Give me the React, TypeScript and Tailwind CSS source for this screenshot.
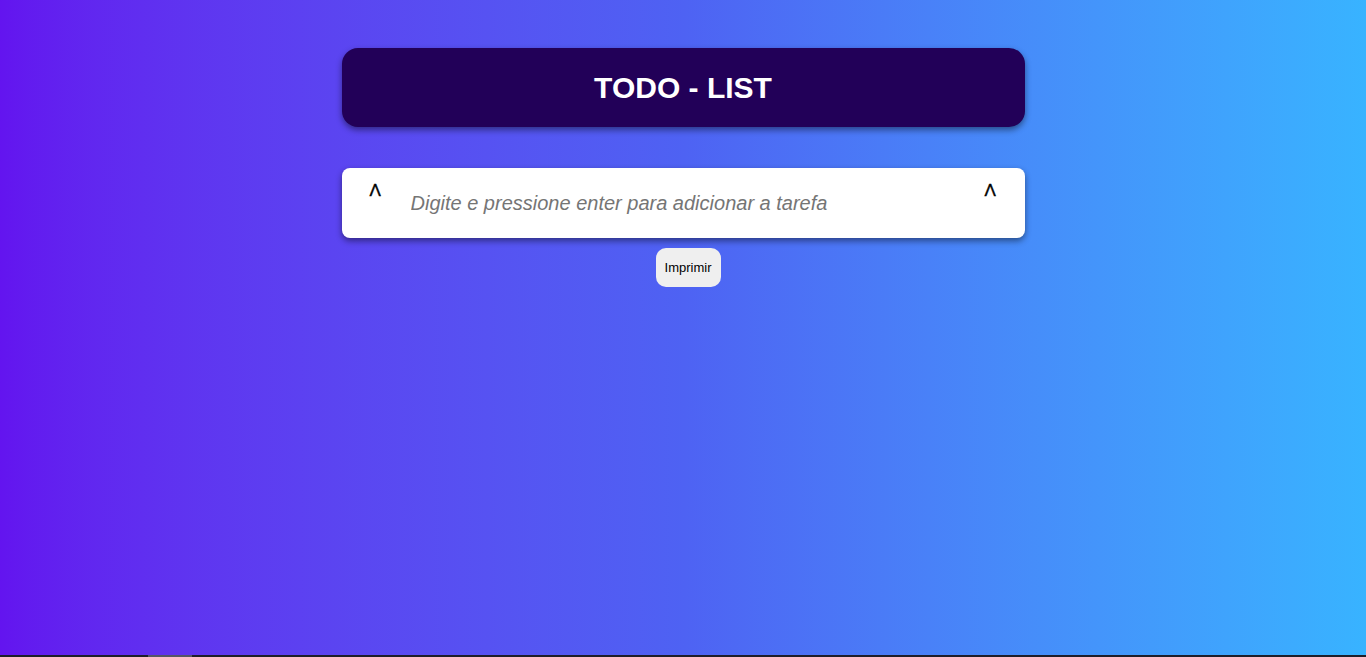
export default function App() {
  return (
    <div className="h-[657px] w-full flex flex-col overflow-hidden" style={{ fontFamily: '"Liberation Sans", Arial, sans-serif' }}>
      <div className="h-[655px] w-full bg-gradient-to-r from-[#6314ef] via-[#4e62f3] to-[#38b3ff] flex flex-col items-center pt-[48px]">
        <div className="w-[683px] h-[79px] rounded-[16px] bg-[#220058] shadow-[0_3px_6px_rgba(0,0,0,0.45)] flex items-center justify-center">
          <h1 className="text-white font-bold text-[30px] leading-none">TODO - LIST</h1>
        </div>
        <div className="mt-[41px] w-[683px] h-[70px] rounded-[8px] bg-white shadow-[0_3px_6px_rgba(0,0,0,0.45)] flex items-start pl-[28px] pr-[28px] pt-[14px]">
          <span className="text-black text-[17px] w-[12px] leading-[17px]" style={{ WebkitTextStroke: '0.4px black' }}>Λ</span>
          <input
            className="flex-1 ml-[29px] mt-[6px] outline-none text-[20px] italic placeholder:text-[#757575] bg-transparent"
            placeholder="Digite e pressione enter para adicionar a tarefa"
          />
          <span className="text-black text-[17px] w-[12px] leading-[17px]" style={{ WebkitTextStroke: '0.4px black' }}>Λ</span>
        </div>
        <button className="mt-[10px] ml-[10px] w-[65px] h-[39px] rounded-[10px] bg-[#efefef] text-black text-[13px]">Imprimir</button>
      </div>
      <div className="h-[2px] w-full bg-[#1e1e2a] relative">
        <div className="absolute left-[148px] top-0 h-[2px] w-[44px] bg-[#555566]" />
      </div>
    </div>
  );
}
